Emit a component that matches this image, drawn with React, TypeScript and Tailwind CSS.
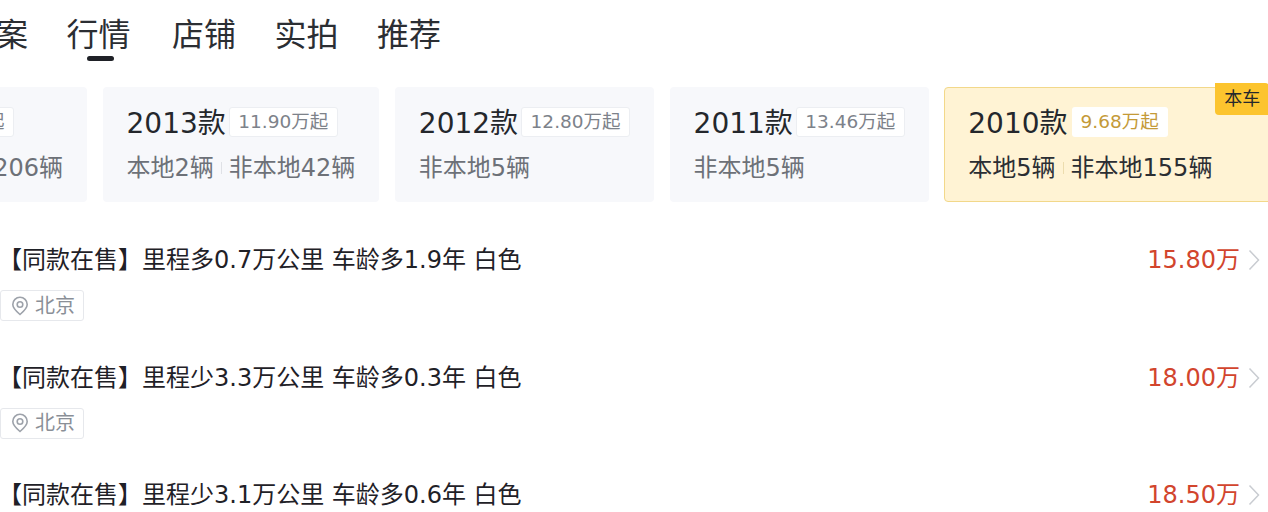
const fontStack = { fontFamily: '"DejaVu Sans", "Noto Sans CJK SC", sans-serif' };

const tabs = ['行情', '店铺', '实拍', '推荐'];

const years = [
  { year: '2013款', price: '11.90万起', local: '本地2辆', other: '非本地42辆' },
  { year: '2012款', price: '12.80万起', other: '非本地5辆' },
  { year: '2011款', price: '13.46万起', other: '非本地5辆' },
];

const listings = [
  { title: '【同款在售】里程多0.7万公里 车龄多1.9年 白色', price: '15.80万', city: '北京' },
  { title: '【同款在售】里程少3.3万公里 车龄多0.3年 白色', price: '18.00万', city: '北京' },
  { title: '【同款在售】里程少3.1万公里 车龄多0.6年 白色', price: '18.50万', city: '北京' },
];

const PinIcon = () => (
  <svg width="18" height="20" viewBox="0 0 18 20" fill="none" stroke="#9da2aa" strokeWidth="1.6">
    <path d="M9 18.5c-4-3.4-7.2-6.4-7.2-10a7.2 7.2 0 0 1 14.4 0c0 3.6-3.2 6.6-7.2 10z" />
    <circle cx="9" cy="8.5" r="2.8" />
  </svg>
);

const Chevron = () => (
  <svg width="12" height="22" viewBox="0 0 12 22" fill="none" stroke="#c9ccd1" strokeWidth="1.5">
    <path d="M1.5 1.5L10.5 11L1.5 20.5" />
  </svg>
);

const App = () => {
  return (
    <div className="w-[1268px] h-[512px] overflow-hidden bg-white" style={fontStack}>
      {/* Tabs */}
      <div className="h-[87px] pt-[11px] flex items-start gap-[38.5px] -ml-[4px] text-[32px] leading-[48px] text-[#2b2e33]">
        <span>案</span>
        {tabs.map((tab, i) => (
          <div key={tab} className={i === 0 ? 'relative mr-[3px]' : 'relative'}>
            <span>{tab}</span>
            {i === 0 && <div className="absolute left-[20px] top-[45px] w-[27px] h-[5px] rounded-sm bg-[#1f2127]" />}
          </div>
        ))}
      </div>

      {/* Year cards */}
      <div className="flex gap-[15.5px] h-[115px] -ml-[190px]">
        <div className="w-[277px] shrink-0 rounded bg-[#f7f8fb] pl-[24px] pt-[21px]">
          <div className="flex items-start justify-end pr-[73px] h-[32px]">
            <span className="-mt-[1px] h-[30px] px-[8.5px] rounded-[3px] border border-[#eceef2] bg-white text-[18.5px] leading-[28px] text-[#7d828a]">11.00万起</span>
          </div>
          <div className="mt-[11px] text-right pr-[24px] text-[24px] leading-[34px] text-[#6d7178]">非本地206辆</div>
        </div>

        {years.map((y) => (
          <div key={y.year} className="shrink-0 rounded bg-[#f7f8fb] px-[24px] pt-[21px]">
            <div className="flex items-start gap-[3px] h-[32px]">
              <span className="text-[28px] leading-[32px] text-[#24272c]">{y.year}</span>
              <span className="-mt-[1px] h-[30px] px-[8.5px] rounded-[3px] border border-[#eceef2] bg-white text-[18.5px] leading-[28px] text-[#7d828a]">{y.price}</span>
            </div>
            <div className="mt-[11px] flex items-center text-[24px] leading-[34px] text-[#6d7178]">
              {y.local && (
                <>
                  <span>{y.local}</span>
                  <span className="w-px h-[12px] mx-[7px] bg-[#dfe1e6]" />
                </>
              )}
              <span>{y.other}</span>
            </div>
          </div>
        ))}

        <div className="relative w-[340px] shrink-0 rounded border border-[#f2d88a] bg-[#fff3d4] px-[23px] pt-[20px]">
          <div className="flex items-start gap-[4px] h-[32px]">
            <span className="text-[28px] leading-[32px] text-[#24272c]">2010款</span>
            <span className="-mt-[1px] h-[30px] px-[9px] rounded-[3px] bg-white text-[18.5px] leading-[30px] text-[#c49a38]">9.68万起</span>
          </div>
          <div className="mt-[11px] flex items-center text-[24px] leading-[34px] text-[#2b2e33]">
            <span>本地5辆</span>
            <span className="w-px h-[12px] mx-[7px] bg-[#ecdcae]" />
            <span>非本地155辆</span>
          </div>
          <div className="absolute -top-[5px] left-[270px] w-[54px] h-[32px] rounded-bl rounded-tr bg-[#fcc42e] text-center text-[18px] leading-[32px] text-[#24272c]">本车</div>
        </div>
      </div>

      {/* Listings */}
      <div className="pt-[40px]">
        {listings.map((item) => (
          <div key={item.title} className="h-[117.5px] flex items-start justify-between">
            <div>
              <div className="-ml-[2px] text-[24px] leading-[36px] text-[#1f2127]">{item.title}</div>
              <div className="mt-[12px] h-[31px] w-[84px] flex items-center gap-[6px] pl-[10px] rounded-[3px] border border-[#e6e8ec] text-[20px] text-[#8a8f97]">
                <PinIcon />
                <span>{item.city}</span>
              </div>
            </div>
            <div className="flex items-center h-[36px] pr-[8px] gap-[10px]">
              <span className="mr-[-2px] text-[24px] leading-[36px] text-[#d2452d]">{item.price}</span>
              <Chevron />
            </div>
          </div>
        ))}
      </div>
    </div>
  );
};

export default App;
